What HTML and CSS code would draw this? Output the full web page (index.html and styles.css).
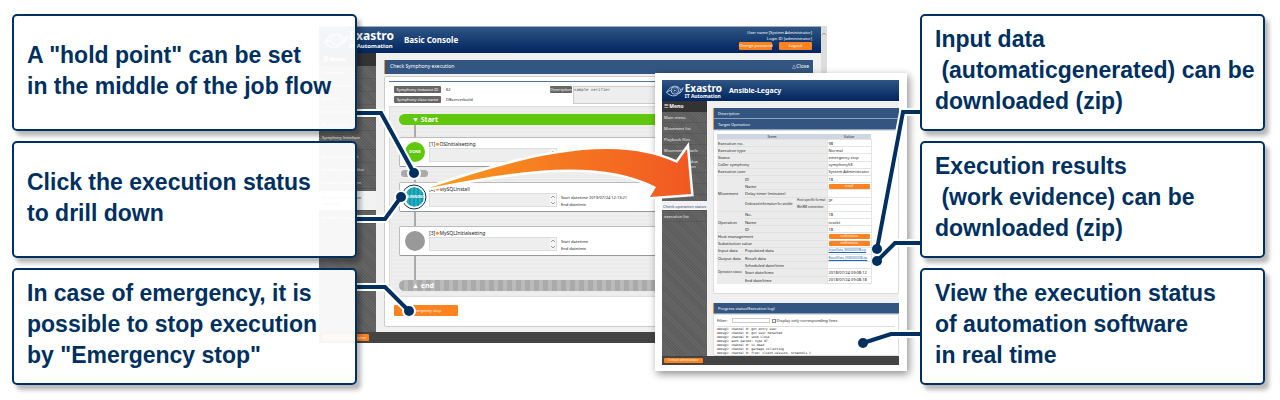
FILE: index.html
```html
<!DOCTYPE html>
<html lang="en">
<head>
<meta charset="utf-8">
<title>Exastro IT Automation</title>
<link rel="stylesheet" href="styles.css">
</head>
<body>
<svg width="0" height="0" class="defs" aria-hidden="true">
  <symbol id="eye" viewBox="0 0 38 28">
    <g fill="none" stroke="#b9cbe0" stroke-width="2">
      <path d="M1 19C6 8 14 4 22 5c5 1 8 4 9 8M3 20c9 8 21 7 26-2 3-6 4-8 8-10M1 19c4-4 7-5 10-5M27 20c4 0 7-4 10-12"/>
      <circle cx="19" cy="14" r="8"/>
    </g>
    <circle cx="19" cy="14" r="4.500" fill="#17365f" stroke="#7fa3c9"/>
    <circle cx="19" cy="14" r="1.500" fill="#fff"/>
  </symbol>
</svg>
<main class="scene">
  <section class="window console">
    <header class="topbar">
      <div class="brand"><svg class="eye"><use href="#eye"/></svg><div class="brand-name">Exastro<small>IT Automation</small></div></div>
      <h1>Basic Console</h1>
      <div class="account">
        <span>User name [System Administrator]</span>
        <span>Login ID [administrator]</span>
        <div class="account-actions"><button>Change password</button><button>Logout</button></div>
      </div>
    </header>
    <div class="body">
      <nav class="side">
        <b>☰ Menu</b>
        <a href="#">Main menu</a>
        <a href="#">System settings</a>
        <a href="#">Regist ed</a>
        <a href="#">Input operation list</a>
        <a href="#">Movement list</a>
        <a href="#" class="tall">Symphony Interface</a>
        <a href="#">Symphony class list</a>
        <a href="#">Symphony class editor</a>
        <a href="#">Symphony execution</a>
        <a href="#" class="current">Symphony execution checking</a>
        <a href="#">Symphony execution list</a>
      </nav>
      <div class="content">
        <h2 class="bar"><span>Check Symphony execution</span><span>△Close</span></h2>
        <div class="sheet">
          <div class="meta">
            <div class="pair"><span class="tag">Symphony instance ID</span><span>62</span></div>
            <div class="pair"><span class="tag">Symphony class name</span><span>DBserverbuild</span></div>
            <label class="tag desc-tag" for="desc">Description</label>
            <textarea id="desc" class="desc" readonly>sample verifier</textarea>
          </div>
          <div class="flow">
            <div class="stage start">▼ Start</div>
            <article class="card">
              <span class="state done">DONE</span>
              <div class="job"><label for="j1">[1]<i>●</i>OSInitialsetting</label><div class="box"><textarea id="j1" readonly></textarea><svg viewBox="0 0 6 12"><path d="M1 4L3 2L5 4M1 8L3 10L5 8"/></svg></div></div>
              <div class="times"><span>Start datetime 2019/07/24 12:13:01</span><span>End datetime</span></div>
            </article>
            <div class="hold"></div>
            <article class="card">
              <span class="state running">RUNNING</span>
              <div class="job"><label for="j2">[2]<i>●</i>MySQLinstall</label><div class="box"><textarea id="j2" readonly></textarea><svg viewBox="0 0 6 12"><path d="M1 4L3 2L5 4M1 8L3 10L5 8"/></svg></div></div>
              <div class="times"><span>Start datetime 2019/07/24 12:13:21</span><span>End datetime</span></div>
            </article>
            <article class="card last">
              <span class="state"></span>
              <div class="job"><label for="j3">[3]<i>●</i>MySQLInitialsetting</label><div class="box"><textarea id="j3" readonly></textarea><svg viewBox="0 0 6 12"><path d="M1 4L3 2L5 4M1 8L3 10L5 8"/></svg></div></div>
              <div class="times"><span>Start datetime</span><span>End datetime</span></div>
            </article>
            <div class="stage end">▲ end</div>
          </div>
          <button class="stop">Emergency stop</button>
        </div>
      </div>
    </div>
    <footer class="foot"><button>Contact administrator</button></footer>
    <svg class="scroll-up" viewBox="0 0 6 12"><path d="M1 8L3 6L5 8"/></svg>
  </section>

  <section class="window legacy">
    <header class="topbar">
      <div class="brand"><svg class="eye"><use href="#eye"/></svg><div class="brand-name">Exastro<small>IT Automation</small></div></div>
      <h1>Ansible-Legacy</h1>
    </header>
    <div class="body">
      <nav class="side">
        <b>☰ Menu</b>
        <a href="#">Main menu</a>
        <a href="#">Movement list</a>
        <a href="#">Playbook files</a>
        <a href="#">Movement details</a>
        <a href="#" class="tall">Substitution value auto-registration</a>
        <a href="#">Target host</a>
        <a href="#">Substitution list</a>
        <a href="#" class="current">Check operation status</a>
        <a href="#">execution list</a>
      </nav>
      <div class="content">
        <h2 class="bar">Description</h2>
        <h2 class="bar">Target Operation</h2>
        <div class="sheet">
          <table>
            <colgroup><col class="c1"><col class="c2"><col class="c3"><col class="c4"></colgroup>
            <thead><tr><th colspan="3">Item</th><th>Value</th></tr></thead>
            <tbody>
              <tr><td colspan="3">Execution no.</td><td>98</td></tr>
              <tr><td colspan="3">Execution type</td><td>Normal</td></tr>
              <tr><td colspan="3">Status</td><td>emergency stop</td></tr>
              <tr><td colspan="3">Caller symphony</td><td>symphony56</td></tr>
              <tr><td colspan="3">Execution user</td><td>System Administrator</td></tr>
              <tr><td rowspan="5">Movement</td><td colspan="2">ID</td><td>18</td></tr>
              <tr><td colspan="2">Name</td><td><button>install</button></td></tr>
              <tr><td colspan="2">Delay timer (minutes)</td><td></td></tr>
              <tr><td rowspan="2" class="fine">Dedicated information for ansible</td><td class="fine">Host specific format</td><td>IP</td></tr>
              <tr><td class="fine">WinRM connection</td><td></td></tr>
              <tr><td rowspan="3">Operation</td><td colspan="2">No.</td><td>18</td></tr>
              <tr><td colspan="2">Name</td><td>tosekt</td></tr>
              <tr><td colspan="2">ID</td><td>18</td></tr>
              <tr><td colspan="3">Host management</td><td><button>confirmation</button></td></tr>
              <tr><td colspan="3">Substitution value</td><td><button>confirmation</button></td></tr>
              <tr><td>Input data</td><td colspan="2">Populated data</td><td class="fine"><a href="#">InputData_0000000098.zip</a></td></tr>
              <tr><td>Output data</td><td colspan="2">Result data</td><td class="fine"><a href="#">ResultData_0000000098.zip</a></td></tr>
              <tr><td rowspan="3" class="fine">Operation status</td><td colspan="2">Scheduled date/time</td><td></td></tr>
              <tr><td colspan="2">Start date/time</td><td>2018/07/24 09:08:12</td></tr>
              <tr><td colspan="2">End date/time</td><td>2018/07/24 09:08:18</td></tr>
            </tbody>
          </table>
        </div>
        <h2 class="bar progress">Progress status(Execution log)</h2>
        <div class="sheet log">
          <div class="filter">
            <label for="filter">Filter:</label><input id="filter" type="text">
            <input id="only" type="checkbox"><label for="only">Display only corresponding lines</label>
          </div>
          <pre>debug1: channel 0: got entry user
debug1: channel 0: got user detached
debug1: channel 0: send close
debug1: auth packet: type 97
debug1: channel 0: is dead
debug1: channel 0: garbage collecting
debug1: channel 0: free: client-session, nchannels 1</pre>
        </div>
      </div>
    </div>
    <footer class="foot"><button>Contact administrator</button></footer>
  </section>

  <svg class="links" width="1280" height="400" viewBox="0 0 1280 400" aria-hidden="true">
    <defs>
      <linearGradient id="heat" gradientUnits="userSpaceOnUse" x1="429" y1="0" x2="691" y2="0">
        <stop offset="0" stop-color="#fa9a1e"/><stop offset="1" stop-color="#f15822"/>
      </linearGradient>
    </defs>
    <path fill="url(#heat)" stroke="#fff" stroke-width="5" paint-order="stroke" d="M429 188C490 168 550 149 607 149C635 149 657 154 677 163L687 149L691 194L650 197L656 187C600 158 520 170 429 188Z"/>
    <g fill="none" stroke="#fff" stroke-width="8">
      <circle cx="414" cy="197" r="12" stroke-width="4"/>
      <path d="M357 113H381L414 173M357 219H385L401 197M357 287H385L409 311M921 112H903L877 249M921 243H895L877 261M921 334H891L863 343"/>
    </g>
    <circle cx="414" cy="197" r="12" fill="none" stroke="#003060"/>
    <g fill="#003060" stroke="#fff" stroke-width="4" paint-order="stroke">
      <circle cx="414" cy="173" r="5"/><circle cx="401" cy="197" r="5"/><circle cx="409" cy="311" r="5"/>
    </g>
    <g fill="#003060"><circle cx="877" cy="249" r="5"/><circle cx="877" cy="261" r="5"/><circle cx="863" cy="343" r="5"/></g>
    <path fill="none" stroke="#003060" stroke-width="4" d="M357 113H381L414 173M357 219H385L401 197M357 287H385L409 311M921 112H903L877 249M921 243H895L877 261M921 334H891L863 343"/>
  </svg>

  <div class="notes">
    <p class="note">A "hold point" can be set
in the middle of the job flow</p>
    <p class="note">Click the execution status
to drill down</p>
    <p class="note">In case of emergency, it is
possible to stop execution
by "Emergency stop"</p>
  </div>
  <div class="notes">
    <p class="note">Input data
 (automaticgenerated) can be
downloaded (zip)</p>
    <p class="note">Execution results
 (work evidence) can be
downloaded (zip)</p>
    <p class="note">View the execution status
of automation software
in real time</p>
  </div>
</main>
</body>
</html>
```
FILE: styles.css
```css
* { box-sizing: border-box; }
body { margin: 0; background: #fff; font-family: "Noto Sans", "Liberation Sans", sans-serif; }
h1, h2, p, pre { margin: 0; }
a { color: inherit; text-decoration: none; }
button, input, textarea { font: inherit; margin: 0; padding: 0; border: 0; border-radius: 0; }
textarea { display: block; resize: none; overflow: hidden; }
button { background: #ff8220; color: #fff; font-size: 4px; line-height: 6px; border-radius: 1px; text-align: center; white-space: nowrap; }
.defs { position: absolute; }

.scene { position: relative; display: flex; justify-content: space-between; padding: 14px 15px 15px 12px; }

/* callouts */
.notes { position: relative; display: flex; flex-direction: column; gap: 10px; width: 345px; }
.note {
  display: flex; align-items: center; min-height: 117px; padding: 0 13px 4px;
  border: 2px solid #003060; border-radius: 5px; background: rgba(255, 255, 255, .95);
  box-shadow: 4px 5px 4px rgba(0, 0, 0, .28);
  color: #003060; font: bold 23px/31px "Liberation Sans", Arial, sans-serif; white-space: pre;
}

/* windows */
.window { position: absolute; display: flex; flex-direction: column; font-size: 5px; line-height: 7px; color: #222; }
.topbar { display: flex; align-items: center; color: #fff; background: linear-gradient(#2f5584, #002560); }
.brand { display: flex; align-items: center; }
.brand-name { font-weight: bold; }
.brand-name small { display: block; }
.body { display: flex; flex: 1; min-height: 0; background: #f0f0f0; }
.side { display: flex; flex-direction: column; flex: none; color: #eee; background: repeating-linear-gradient(45deg, #5c5c5c 0 1px, #666 1px 2px); }
.side b { background: #333; color: #fff; }
.side a { display: block; border-bottom: 1px solid #585858; }
.side .current { background: #f2f2f2; color: #1f4177; }
.content { display: flex; flex-direction: column; flex: 1; min-width: 0; }
.bar { display: flex; justify-content: space-between; background: #335581; border-left: 1px solid #ff9020; color: #fff; font-weight: normal; font-size: 5px; }
.sheet { background: #fff; border: 1px solid #ddd; border-radius: 2px; }
.foot { background: #444; display: flex; align-items: center; }

/* basic console */
.console { left: 319px; top: 26px; width: 508px; padding-right: 6px; background: #ddd; }
.console .topbar { height: 27px; border-top: 1px solid #9fb0c4; }
.console .brand { width: 75px; padding-left: 5px; gap: 1px; }
.console .eye { width: 27px; height: 20px; }
.console .brand-name { font-size: 12px; line-height: 12px; }
.console .brand-name small { font-size: 6px; line-height: 8px; }
.console h1 { flex: 1; padding-left: 10px; font-size: 8px; line-height: 10px; }
.account { display: flex; flex-direction: column; align-items: flex-end; padding-right: 9px; font-size: 4px; line-height: 6px; }
.account-actions { display: flex; gap: 7px; }
.account-actions button { width: 33px; height: 8px; }
.console .side { width: 57px; font-size: 4px; line-height: 6px; }
.console .side b { height: 13px; padding: 3px 4px; font-size: 6px; }
.console .side a { height: 13px; padding: 4px 3px; }
.console .side .tall { height: 19px; }
.console .side .current { height: 20px; margin-top: 2px; }
.console .content { padding: 7px 8px 5px; }
.console .bar { padding: 3px 4px 4px 5px; }
.console .content .sheet { margin-top: 2px; padding: 4px 0 5px 4px; border-color: #ccc; }
.meta {
  display: grid; grid-template-columns: 155px 22px 1fr; grid-template-rows: 7px 7px; row-gap: 3px; column-gap: 1px;
  padding: 4px 5px 3px; border-top: 1px solid #52749c;
}
.pair { grid-column: 1; display: flex; gap: 5px; font-size: 4px; }
.pair .tag { width: 47px; }
.tag { background: #666; color: #fff; border-radius: 1px; text-align: center; font-size: 4px; }
.desc-tag { grid-column: 2; grid-row: 1; }
.desc { grid-column: 3; grid-row: 1 / 3; height: 18px; border: 1px solid #ccc; background: #eee; color: #555; font: 4px/5px "DejaVu Sans Mono", monospace; width: 100%; }
.flow {
  display: flex; flex-direction: column; padding: 7px 0 5px 9px; border: 1px solid #ddd;
  background: linear-gradient(90deg, transparent 15px, #aaa 15px 17px, transparent 17px) 9px 12px / 100% 165px no-repeat, repeating-linear-gradient(#ebebeb 0 2px, #eee 2px 4px);
}
.stage { height: 11px; padding-left: 13px; border-radius: 6px 0 0 6px; color: #fff; font-weight: bold; font-size: 7px; line-height: 11px; }
.start { background: #5fc80d; }
.end { margin-top: 24px; background: repeating-linear-gradient(90deg, #aaa 0 5px, #bababa 5px 9px); }
.card {
  display: flex; height: 30px; margin-top: 12px; padding: 3px 5px; gap: 4px;
  background: #fff; border: 1px solid #bbb; border-bottom-color: #999; border-radius: 2px 0 0 2px;
}
.hold { width: 27px; height: 7px; margin: 3px 0 -7px 2px; border-radius: 4px; background: #aaa; }
.card.last { margin-top: 14px; }
.state { flex: none; width: 20px; height: 20px; margin: 1px 0; border-radius: 50%; background: #999; color: #fff; font-weight: bold; font-size: 4px; line-height: 20px; text-align: center; }
.done { background: #5fc80d; }
.running { background: repeating-linear-gradient(90deg, #109bb0 0 2px, #29acc0 2px 4px); }
.job { flex: none; width: 128px; }
.job label { display: block; line-height: 8px; margin-top: -1px; }
.job i { color: #ff8a1c; font-style: normal; font-size: 7px; line-height: 7px; }
.box { display: flex; height: 14px; border: 1px solid #ddd; background: #eee; }
.box textarea { flex: 1; min-width: 0; height: 100%; background: transparent; }
.box svg { width: 6px; height: 12px; background: #f6f6f6; }
.box path, .scroll-up path { fill: none; stroke: #999; }
.times { display: flex; flex-direction: column; padding-top: 8px; font-size: 4px; }
.stop { display: block; width: 64px; height: 11px; margin: 8px 0 5px 5px; font-size: 4px; }
.scroll-up { position: absolute; right: 0; top: 1px; width: 6px; height: 12px; }
.console .foot { height: 11px; padding-left: 3px; }
.console .foot button { width: 47px; height: 7px; }

/* ansible legacy */
.legacy { left: 655px; top: 73px; width: 252px; height: 298px; padding: 7px 8px 6px 7px; background: #fff; box-shadow: 2px 3px 8px rgba(0, 0, 0, .45); font-size: 4px; line-height: 5px; }
.legacy .topbar { height: 21px; flex: none; }
.legacy .brand { width: 60px; padding-left: 4px; gap: 1px; }
.legacy .eye { width: 20px; height: 15px; }
.legacy .brand-name { font-size: 10px; line-height: 10px; }
.legacy .brand-name small { font-size: 5px; line-height: 6px; }
.legacy h1 { padding-left: 7px; font-size: 7px; line-height: 9px; }
.legacy .side { width: 45px; white-space: nowrap; }
.legacy .side b { height: 11px; padding: 3px 2px; font-size: 5px; }
.legacy .side a { height: 11px; padding: 3px 2px; }
.legacy .side .tall { height: 17px; white-space: normal; }
.legacy .side .current { height: 10px; margin-top: 6px; padding: 3px 1px; }
.legacy .content { padding: 7px 0 0 6px; }
.legacy .bar { flex: none; height: 11px; padding: 3px 4px; font-size: 4px; border-bottom: 1px solid #8ba0bb; }
.legacy .sheet { flex: none; padding: 3px 4px 9px 3px; }
.legacy table { width: 154px; height: 150px; table-layout: fixed; border-collapse: collapse; font-size: 4px; line-height: 5px; white-space: nowrap; }
.c1 { width: 27px; }
.c2 { width: 52px; }
.c3 { width: 31px; }
.c4 { width: 44px; }
th { padding: 0; background: #cdd6e1; font-weight: normal; }
td { padding: 0 1px; background: #ebebeb; border-top: 1px solid #e1e1e1; }
tr td:last-child { background: #fff; border: 1px solid #e4e4e4; }
td.fine { font-size: 3px; }
td a { color: #1d65b5; text-decoration: underline; }
td button { display: block; width: 100%; height: 5px; line-height: 5px; font-size: 3px; }
.legacy .progress { margin-top: 9px; }
.legacy .log { flex: 1; min-height: 0; padding: 3px 3px 0; overflow: hidden; }
.filter { display: flex; align-items: center; font-size: 4px; }
.filter input[type="text"] { width: 38px; height: 5px; margin: 0 2px 0 4px; border: 1px solid #ccc; }
.filter input[type="checkbox"] { appearance: none; width: 4px; height: 4px; margin-right: 1px; border: 1px solid #888; }
.log pre { margin-top: 3px; border-top: 1px solid #ddd; font: 3px/4px "DejaVu Sans Mono", monospace; color: #111; }
.legacy .foot { flex: none; height: 9px; padding-left: 2px; }
.legacy .foot button { width: 39px; height: 5px; line-height: 5px; font-size: 3px; }

.links { position: absolute; left: 0; top: 0; }
```
